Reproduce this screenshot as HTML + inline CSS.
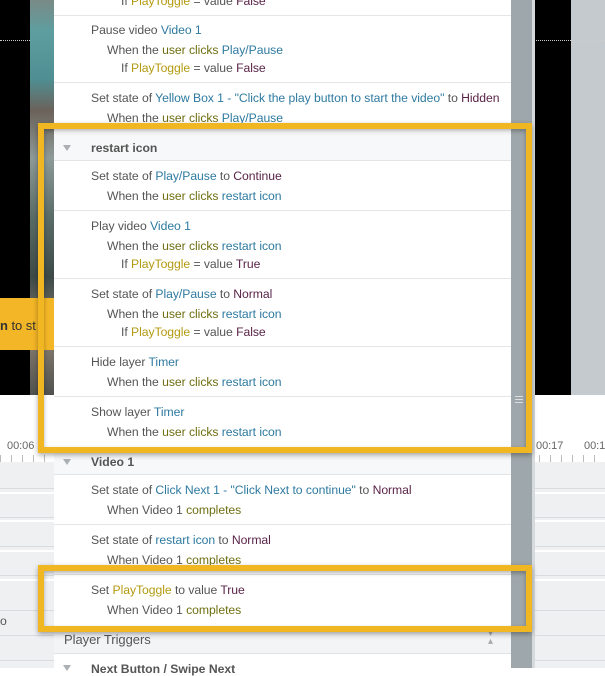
<!DOCTYPE html>
<html><head><meta charset="utf-8"><style>
*{margin:0;padding:0;box-sizing:border-box}
body{width:605px;height:668px;overflow:hidden;position:relative;background:#fff;font-family:"Liberation Sans",sans-serif;font-size:12px;color:#555}
.a{position:absolute}
.t{position:absolute;white-space:nowrap;font-size:12.2px;color:#555;letter-spacing:-0.05px}
.b{color:#2e7aa0}.o{color:#6f6f12}.y{color:#b39a10}.p{color:#5a2348}
.sep{position:absolute;left:54px;width:457px;height:1px;background:#e4e6e8}
.hdr{position:absolute;left:54px;width:457px;background:#f7f8f9;border-bottom:1px solid #e2e4e6}
.arr{position:absolute;left:63px;width:0;height:0;border-left:4px solid transparent;border-right:4px solid transparent;border-top:6px solid #aab0b4}
.hb{position:absolute;left:91px;font-weight:bold;color:#555;font-size:12.2px}
.yb{position:absolute;border:6px solid #f0b722;box-shadow:0 2px 5px rgba(0,0,0,.35), inset 0 2px 4px rgba(0,0,0,.3)}
.trk{position:absolute;height:1px;background:#d8dcdf}
.tk{position:absolute;top:455px;height:7px;width:100%;background:repeating-linear-gradient(90deg,#bbb 0 1px,transparent 1px 11px)}
</style></head><body>
<div class="a" style="left:0;top:0;width:30px;height:395px;background:#000"></div>
<div class="a" style="left:30px;top:0;width:24px;height:395px;background:linear-gradient(180deg,#7a8a86 0%,#5e9ea0 8%,#4f8f93 20%,#6b625a 28%,#8d9a98 40%,#5a6c68 55%,#3d4a48 70%,#8a7f72 85%,#50524f 100%)"></div>
<div class="a" style="left:0;top:40px;width:30px;border-top:1px dotted #ccc"></div>
<div class="a" style="left:0;top:298px;width:54px;height:52px;background:#f3b626"></div>
<div class="t" style="left:0;top:318px;color:#333;font-size:13px"><b>n</b> to st<span style="margin-left:4px">r</span></div>
<div class="a" style="left:531px;top:0;width:40px;height:395px;background:#000"></div>
<div class="a" style="left:571px;top:0;width:34px;height:395px;background:#c4cacd"></div>
<div class="a" style="left:531px;top:40px;width:74px;border-top:1px dotted #ccc"></div>
<div class="a" style="left:0;top:395px;width:605px;height:273px;background:#fff"></div>
<div class="t" style="left:7px;top:440px;color:#666;font-size:11px">00:06</div>
<div class="t" style="left:536px;top:440px;color:#666;font-size:11px">00:17</div>
<div class="t" style="left:584px;top:440px;color:#666;font-size:11px">00:1</div>
<div class="tk" style="left:0"></div>
<div class="a" style="left:0;top:462px;width:605px;height:206px;background:#eef0f2"></div>
<div class="trk" style="left:0;top:488px;width:605px"></div>
<div class="trk" style="left:0;top:492px;width:605px;background:#fff;height:2px"></div>
<div class="trk" style="left:0;top:517px;width:605px"></div>
<div class="trk" style="left:0;top:520px;width:605px;background:#fff;height:2px"></div>
<div class="trk" style="left:0;top:546px;width:605px"></div>
<div class="trk" style="left:0;top:550px;width:605px;background:#fff;height:2px"></div>
<div class="trk" style="left:0;top:575px;width:605px"></div>
<div class="trk" style="left:0;top:579px;width:605px;background:#fff;height:2px"></div>
<div class="trk" style="left:0;top:610px;width:605px"></div>
<div class="trk" style="left:0;top:635px;width:605px"></div>
<div class="trk" style="left:0;top:660px;width:605px"></div>
<div class="t" style="left:0;top:614px;color:#555">o</div>
<div class="a" style="left:54px;top:0;width:457px;height:668px;background:#fff"></div>
<div class="a" style="left:511px;top:0;width:21px;height:668px;background:#9ea7ab"></div>
<div class="a" style="left:532px;top:0;width:3px;height:668px;background:#d6dadc"></div>
<div class="a" style="left:515px;top:396px;width:8px;height:1px;background:#ddd;box-shadow:0 3px 0 #ddd,0 6px 0 #ddd"></div>

<div class="t" style="left:121px;top:-6px">If <span class="y">PlayToggle</span> = value <span class="p">False</span></div>
<div class="sep" style="top:15px"></div>
<div class="t" style="left:91px;top:23px">Pause video <span class="b">Video 1</span></div>
<div class="t" style="left:107px;top:43px">When the <span class="o">user clicks</span> <span class="b">Play/Pause</span></div>
<div class="t" style="left:121px;top:61px">If <span class="y">PlayToggle</span> = value <span class="p">False</span></div>
<div class="sep" style="top:82px"></div>
<div class="t" style="left:91px;top:91px">Set state of <span class="b">Yellow Box 1 - "Click the play button to start the video"</span> to <span class="p">Hidden</span></div>
<div class="t" style="left:107px;top:111px">When the <span class="o">user clicks</span> <span class="b">Play/Pause</span></div>

<div class="hdr" style="top:133px;height:28px"></div>
<div class="arr" style="top:145px"></div>
<div class="hb" style="top:141px">restart icon</div>
<div class="t" style="left:91px;top:169px">Set state of <span class="b">Play/Pause</span> to <span class="p">Continue</span></div>
<div class="t" style="left:107px;top:189px">When the <span class="o">user clicks</span> <span class="b">restart icon</span></div>
<div class="sep" style="top:210px"></div>
<div class="t" style="left:91px;top:219px">Play video <span class="b">Video 1</span></div>
<div class="t" style="left:107px;top:239px">When the <span class="o">user clicks</span> <span class="b">restart icon</span></div>
<div class="t" style="left:121px;top:257px">If <span class="y">PlayToggle</span> = value <span class="p">True</span></div>
<div class="sep" style="top:278px"></div>
<div class="t" style="left:91px;top:287px">Set state of <span class="b">Play/Pause</span> to <span class="p">Normal</span></div>
<div class="t" style="left:107px;top:307px">When the <span class="o">user clicks</span> <span class="b">restart icon</span></div>
<div class="t" style="left:121px;top:325px">If <span class="y">PlayToggle</span> = value <span class="p">False</span></div>
<div class="sep" style="top:346px"></div>
<div class="t" style="left:91px;top:355px">Hide layer <span class="b">Timer</span></div>
<div class="t" style="left:107px;top:375px">When the <span class="o">user clicks</span> <span class="b">restart icon</span></div>
<div class="sep" style="top:396px"></div>
<div class="t" style="left:91px;top:405px">Show layer <span class="b">Timer</span></div>
<div class="t" style="left:107px;top:425px">When the <span class="o">user clicks</span> <span class="b">restart icon</span></div>

<div class="hdr" style="top:449px;height:26px"></div>
<div class="arr" style="top:459px"></div>
<div class="hb" style="top:455px">Video 1</div>
<div class="t" style="left:91px;top:483px">Set state of <span class="b">Click Next 1 - "Click Next to continue"</span> to <span class="p">Normal</span></div>
<div class="t" style="left:107px;top:503px">When Video 1 <span class="o">completes</span></div>
<div class="sep" style="top:524px"></div>
<div class="t" style="left:91px;top:533px">Set state of <span class="b">restart icon</span> to <span class="p">Normal</span></div>
<div class="t" style="left:107px;top:553px">When Video 1 <span class="o">completes</span></div>
<div class="sep" style="top:574px"></div>
<div class="t" style="left:91px;top:583px">Set <span class="y">PlayToggle</span> to value <span class="p">True</span></div>
<div class="t" style="left:107px;top:603px">When Video 1 <span class="o">completes</span></div>

<div class="a" style="left:54px;top:626px;width:457px;height:28px;background:#f3f4f5;border-bottom:1px solid #e0e2e4"></div>
<div class="t" style="left:64px;top:632px;font-size:13px;color:#555">Player Triggers</div>
<div class="t" style="left:488px;top:630px;color:#aaa;font-size:10px;line-height:8px">▾<br>▴</div>
<div class="arr" style="top:665px"></div>
<div class="hb" style="top:662px">Next Button / Swipe Next</div>

<div class="yb" style="left:38px;top:123px;width:494px;height:330px"></div>
<div class="yb" style="left:38px;top:565px;width:494px;height:67px"></div>
</body></html>
